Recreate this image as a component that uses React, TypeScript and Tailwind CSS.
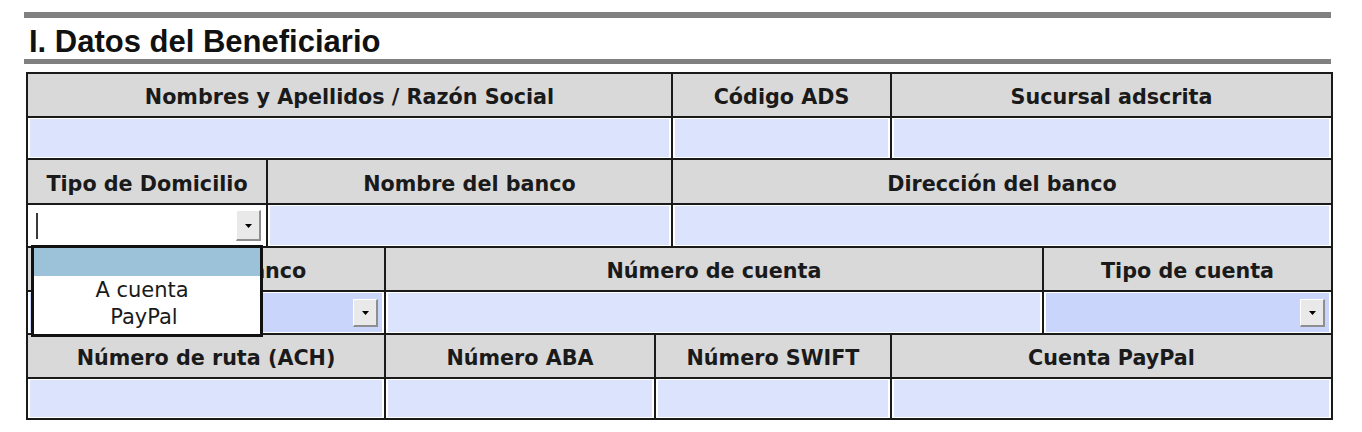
import React from "react";

const B = "border-[#1a1a1a]";

function Head({ className, children }: { className: string; children?: React.ReactNode }) {
  return (
    <div
      className={`flex items-center justify-center border-r-2 border-[#1a1a1a] bg-[#d9d9d9] pt-[6px] whitespace-nowrap font-['DejaVu_Sans',sans-serif] text-[20.7px] font-bold text-[#1a1a1a] ${className}`}
    >
      {children}
    </div>
  );
}

function Field({ className }: { className: string }) {
  return (
    <div className={`border-r-2 border-[#1a1a1a] bg-white px-[2px] py-[1px] ${className}`}>
      <div className="h-full bg-[#dbe3fd]" />
    </div>
  );
}

function DropButton({ tall }: { tall?: boolean }) {
  return (
    <div
      className={`flex w-[25px] items-center justify-center border-l border-t border-l-white border-t-white border-b-2 border-r-2 border-b-[#8e8e8e] border-r-[#8e8e8e] bg-[#e9e9e9] ${
        tall ? "h-[31px]" : "h-[28px]"
      }`}
    >
      <svg width="7" height="4" viewBox="0 0 7 4" className="mt-[1px]">
        <path d="M0 0H7L3.5 4Z" fill="#000" />
      </svg>
    </div>
  );
}

function SelectField({ className }: { className: string }) {
  return (
    <div className={`border-r-2 border-[#1a1a1a] bg-white px-[2px] py-[1px] ${className}`}>
      <div className="flex h-full items-center justify-end bg-[#c9d5fa] pr-[4px]">
        <DropButton />
      </div>
    </div>
  );
}

export default function App() {
  return (
    <div className="h-[432px] w-[1362px] overflow-hidden bg-white pt-[12px]">
      <div className="ml-[24px] h-[6px] w-[1307px] bg-[#808080]" />
      <div className="ml-[29px] mt-[5px] h-[36px] pt-[1px] font-['Liberation_Sans',Arial,sans-serif] text-[31px] font-bold leading-[36px] text-[#111]">
        I. Datos del Beneficiario
      </div>
      <div className="ml-[24px] h-[5px] w-[1307px] bg-[#808080]" />

      <div className={`ml-[26px] mt-[8px] w-[1307px] border-l-2 border-t-2 ${B}`}>
        {/* Row 1 */}
        <div className={`flex h-[44px] border-b-2 ${B}`}>
          <Head className="w-[645px]">Nombres y Apellidos / Razón Social</Head>
          <Head className="w-[219px]">Código ADS</Head>
          <Head className="w-[441px]">Sucursal adscrita</Head>
        </div>
        <div className={`flex h-[42px] border-b-2 ${B}`}>
          <Field className="w-[645px]" />
          <Field className="w-[219px]" />
          <Field className="w-[441px]" />
        </div>

        {/* Row 2 */}
        <div className={`flex h-[45px] border-b-2 ${B}`}>
          <Head className="w-[240px]">Tipo de Domicilio</Head>
          <Head className="w-[405px]">Nombre del banco</Head>
          <Head className="w-[660px]">Dirección del banco</Head>
        </div>
        <div className={`relative z-10 flex h-[43px] border-b-2 ${B}`}>
          <div className="relative flex w-[240px] items-center border-r-2 border-[#1a1a1a] bg-white pr-[5px]">
            <div className="ml-[8px] h-[26px] w-[2px] bg-[#3a3a3a]" />
            <div className="flex-1" />
            <DropButton tall />
            <div className="absolute left-[3px] top-[40px] h-[92px] w-[232px] border-[3px] border-[#111] bg-white font-['DejaVu_Sans',sans-serif] text-[21px] text-[#1a1a1a]">
              <div className="h-[28px] bg-[#9cc2da]" />
              <div className="pt-[1px] pr-[10px] text-center leading-[27px]">A cuenta</div>
              <div className="pr-[6px] text-center leading-[27px]">PayPal</div>
            </div>
          </div>
          <Field className="w-[405px]" />
          <Field className="w-[660px]" />
        </div>

        {/* Row 3 */}
        <div className={`flex h-[44px] border-b-2 ${B}`}>
          <Head className="w-[358px]">Código del banco</Head>
          <Head className="w-[658px]">Número de cuenta</Head>
          <Head className="w-[289px]">Tipo de cuenta</Head>
        </div>
        <div className={`flex h-[43px] border-b-2 ${B}`}>
          <SelectField className="w-[358px]" />
          <Field className="w-[658px]" />
          <SelectField className="w-[289px]" />
        </div>

        {/* Row 4 */}
        <div className={`flex h-[44px] border-b-2 ${B}`}>
          <Head className="w-[358px]">Número de ruta (ACH)</Head>
          <Head className="w-[270px]">Número ABA</Head>
          <Head className="w-[236px]">Número SWIFT</Head>
          <Head className="w-[441px]">Cuenta PayPal</Head>
        </div>
        <div className={`flex h-[41px] border-b-2 ${B}`}>
          <Field className="w-[358px]" />
          <Field className="w-[270px]" />
          <Field className="w-[236px]" />
          <Field className="w-[441px]" />
        </div>
      </div>
    </div>
  );
}
